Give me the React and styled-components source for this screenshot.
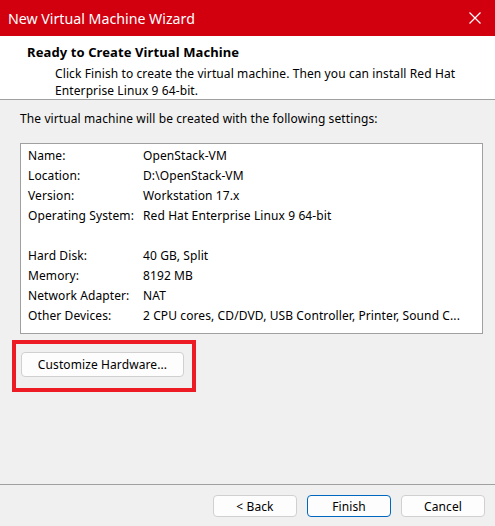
import React from 'react';
import styled, { createGlobalStyle } from 'styled-components';

const GlobalStyle = createGlobalStyle`
  html, body {
    margin: 0;
    padding: 0;
    background: #f0f0f0;
  }
  body {
    font-family: "Noto Sans", "Open Sans", sans-serif;
    color: #000;
    letter-spacing: 0.1px;
  }
`;

const Window = styled.div`
  width: 495px;
  height: 526px;
  display: flex;
  flex-direction: column;
  background: #f0f0f0;
  overflow: hidden;
`;

const TitleBar = styled.div`
  height: 36px;
  flex: none;
  background: #d2000f;
  display: flex;
  align-items: center;
  justify-content: space-between;
  padding: 0 14px 0 8px;
  color: #fff;
  font-size: 14.2px;
  letter-spacing: 0;
`;

const CloseIcon = styled.svg`
  width: 12px;
  height: 12px;
  display: block;
`;

const Header = styled.div`
  height: 64px;
  flex: none;
  background: #fff;
  border-bottom: 1px solid #a0a0a0;
  padding: 8px 0 0 27px;
  box-sizing: border-box;
`;

const Heading = styled.div`
  font-weight: 700;
  font-size: 13px;
  line-height: 16px;
`;

const Subtitle = styled.div`
  font-size: 12px;
  line-height: 17px;
  padding: 5px 0 0 28px;
`;

const Body = styled.div`
  flex: 1;
  padding: 11px 12px 0 20px;
  font-size: 12px;
`;

const Intro = styled.div`
  line-height: 16px;
  margin-bottom: 16px;
`;

const SettingsBox = styled.div`
  width: 463px;
  height: 191px;
  box-sizing: border-box;
  background: #fff;
  border: 1px solid #a0a0a0;
  padding: 1px 0 0 7px;
`;

const Row = styled.div`
  display: grid;
  grid-template-columns: 115px 1fr;
  height: 20px;
  align-items: center;
  white-space: nowrap;
`;

const Highlight = styled.div`
  width: 184px;
  height: 52px;
  box-sizing: border-box;
  border: 4px solid #ed1c24;
  margin: 6px 0 0 -8px;
  padding: 8px 0 0 5px;
`;

const Button = styled.button`
  width: ${p => p.$w || 84}px;
  height: ${p => p.$h || 22}px;
  box-sizing: border-box;
  background: #fdfdfd;
  border: 1px solid ${p => (p.$primary ? '#0067c0' : '#d0d0d0')};
  border-radius: 4px;
  font-family: inherit;
  font-size: 12px;
  letter-spacing: inherit;
  color: #000;
  padding: 0;
`;

const Footer = styled.div`
  height: 42px;
  flex: none;
  box-sizing: border-box;
  border-top: 1px solid #a0a0a0;
  display: flex;
  justify-content: flex-end;
  gap: 10px;
  padding: 10px 10px 0 0;
`;

const settings = [
  ['Name:', 'OpenStack-VM'],
  ['Location:', 'D:\\OpenStack-VM'],
  ['Version:', 'Workstation 17.x'],
  ['Operating System:', 'Red Hat Enterprise Linux 9 64-bit'],
  ['', ''],
  ['Hard Disk:', '40 GB, Split'],
  ['Memory:', '8192 MB'],
  ['Network Adapter:', 'NAT'],
  ['Other Devices:', '2 CPU cores, CD/DVD, USB Controller, Printer, Sound C...'],
];

export default function App() {
  return (
    <Window>
      <GlobalStyle />
      <TitleBar>
        <span>New Virtual Machine Wizard</span>
        <CloseIcon viewBox="0 0 12 12">
          <path d="M0.5 0.5 L11.5 11.5 M11.5 0.5 L0.5 11.5" stroke="#fff" strokeWidth="1.2" />
        </CloseIcon>
      </TitleBar>
      <Header>
        <Heading>Ready to Create Virtual Machine</Heading>
        <Subtitle>
          Click Finish to create the virtual machine. Then you can install Red Hat
          <br />
          Enterprise Linux 9 64-bit.
        </Subtitle>
      </Header>
      <Body>
        <Intro>The virtual machine will be created with the following settings:</Intro>
        <SettingsBox>
          {settings.map(([label, value], i) => (
            <Row key={i}>
              <span>{label}</span>
              <span>{value}</span>
            </Row>
          ))}
        </SettingsBox>
        <Highlight>
          <Button $w={163} $h={25}>Customize Hardware...</Button>
        </Highlight>
      </Body>
      <Footer>
        <Button>&lt; Back</Button>
        <Button $primary>Finish</Button>
        <Button>Cancel</Button>
      </Footer>
    </Window>
  );
}
